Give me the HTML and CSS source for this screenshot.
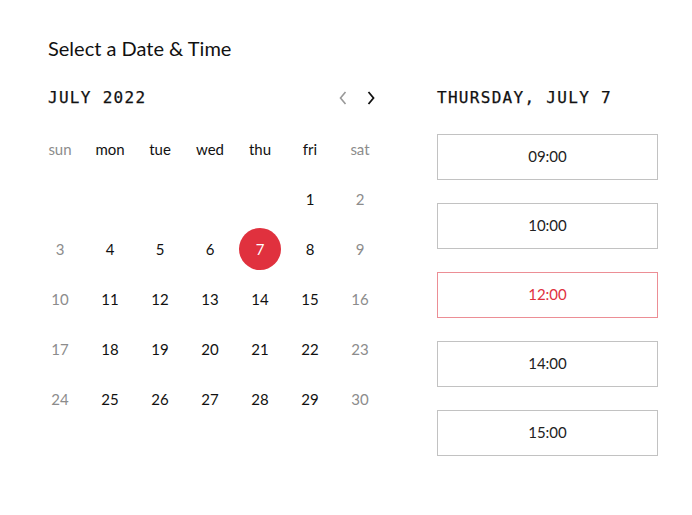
FILE: index.html
```html
<!DOCTYPE html>
<html lang="en">
<head>
  <meta charset="UTF-8">
  <meta name="viewport" content="width=device-width, initial-scale=1.0">
  <title>Select a Date &amp; Time</title>
  <link rel="stylesheet" href="styles.css">
</head>
<body>
  <main class="picker">
    <h1 class="title">Select a Date &amp; Time</h1>

    <div class="columns">
      <section class="calendar">
        <div class="cal-head">
          <h2 class="mono">July 2022</h2>
          <div class="nav">
            <button class="arrow prev" aria-label="Previous month">
              <svg width="8" height="14" viewBox="0 0 8 14"><polyline points="6.5,1 1.5,7 6.5,13" /></svg>
            </button>
            <button class="arrow next" aria-label="Next month">
              <svg width="8" height="14" viewBox="0 0 8 14"><polyline points="1.5,1 6.5,7 1.5,13" /></svg>
            </button>
          </div>
        </div>

        <div class="grid">
          <span class="dow weekend">sun</span>
          <span class="dow">mon</span>
          <span class="dow">tue</span>
          <span class="dow">wed</span>
          <span class="dow">thu</span>
          <span class="dow">fri</span>
          <span class="dow weekend">sat</span>

          <span></span><span></span><span></span><span></span><span></span>
          <span class="day">1</span>
          <span class="day weekend">2</span>

          <span class="day weekend">3</span>
          <span class="day">4</span>
          <span class="day">5</span>
          <span class="day">6</span>
          <span class="day"><b class="selected">7</b></span>
          <span class="day">8</span>
          <span class="day weekend">9</span>

          <span class="day weekend">10</span>
          <span class="day">11</span>
          <span class="day">12</span>
          <span class="day">13</span>
          <span class="day">14</span>
          <span class="day">15</span>
          <span class="day weekend">16</span>

          <span class="day weekend">17</span>
          <span class="day">18</span>
          <span class="day">19</span>
          <span class="day">20</span>
          <span class="day">21</span>
          <span class="day">22</span>
          <span class="day weekend">23</span>

          <span class="day weekend">24</span>
          <span class="day">25</span>
          <span class="day">26</span>
          <span class="day">27</span>
          <span class="day">28</span>
          <span class="day">29</span>
          <span class="day weekend">30</span>
        </div>
      </section>

      <section class="times">
        <h2 class="mono">Thursday, July 7</h2>
        <div class="slots">
          <button class="slot">09:00</button>
          <button class="slot">10:00</button>
          <button class="slot active">12:00</button>
          <button class="slot">14:00</button>
          <button class="slot">15:00</button>
        </div>
      </section>
    </div>
  </main>
</body>
</html>
```

FILE: styles.css
```css
body {
  margin: 0;
  background: #fff;
  color: #111;
  font-family: Lato, "Open Sans", sans-serif;
}

.picker {
  padding: 36px 0 0 35px;
}

.title {
  margin: 0 0 0 13px;
  font-size: 20px;
  font-weight: 400;
  line-height: 24px;
  color: #111;
}

.columns {
  display: flex;
  gap: 52px;
  margin-top: 23px;
}

.mono {
  margin: 0;
  font-family: "DejaVu Sans Mono", "Liberation Mono", monospace;
  font-size: 16px;
  font-weight: 400;
  letter-spacing: 1.3px;
  text-transform: uppercase;
  line-height: 30px;
  color: #111;
  -webkit-text-stroke: 0.25px #111;
}

.cal-head {
  display: flex;
  align-items: center;
  justify-content: space-between;
  height: 30px;
  padding: 0 10px 0 13px;
}

.nav {
  display: flex;
  gap: 20px;
}

.arrow {
  display: flex;
  padding: 0;
  border: 0;
  background: none;
  cursor: pointer;
}

.arrow polyline {
  fill: none;
  stroke-width: 1.6;
}

.prev polyline {
  stroke: #999;
}

.next polyline {
  stroke: #111;
  stroke-width: 1.8;
}

.grid {
  display: grid;
  grid-template-columns: repeat(7, 50px);
  grid-auto-rows: 50px;
  margin-top: 11px;
}

.grid span {
  display: flex;
  align-items: center;
  justify-content: center;
  padding-bottom: 1px;
  font-size: 15px;
  color: #111;
}

.grid .weekend {
  color: #8c8c8c;
}

.selected {
  display: flex;
  align-items: center;
  justify-content: center;
  width: 42px;
  height: 42px;
  border-radius: 50%;
  background: #e0313e;
  color: #fff;
  font-weight: 400;
}

.times {
  width: 221px;
}

.slots {
  display: flex;
  flex-direction: column;
  gap: 23px;
  margin-top: 21px;
}

.slot {
  height: 46px;
  padding: 0 0 2px;
  border: 1px solid #c2c2c2;
  background: #fff;
  font-family: Lato, "Open Sans", sans-serif;
  font-size: 15px;
  color: #222;
  cursor: pointer;
}

.slot.active {
  border-color: #ec8e95;
  color: #e0313e;
}
```
